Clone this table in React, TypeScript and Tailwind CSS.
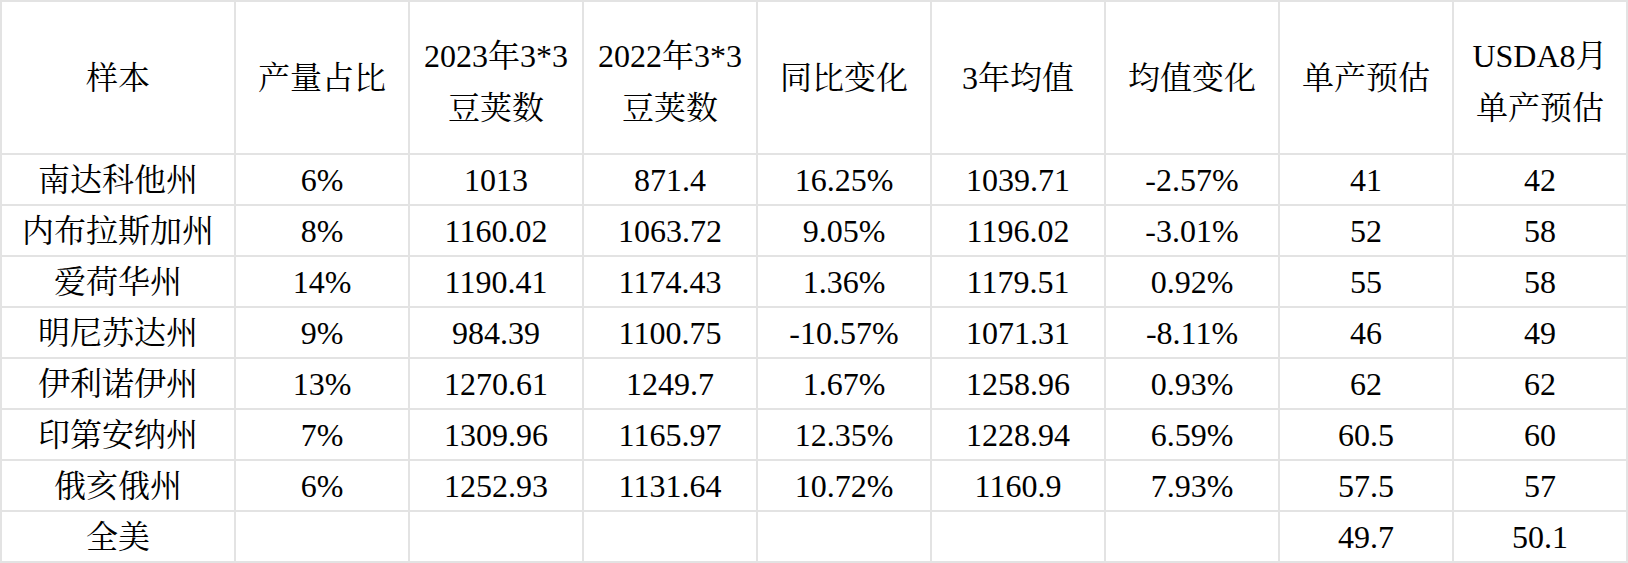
import React from "react";

const header: string[][] = [
  ["样本"],
  ["产量占比"],
  ["2023年3*3", "豆荚数"],
  ["2022年3*3", "豆荚数"],
  ["同比变化"],
  ["3年均值"],
  ["均值变化"],
  ["单产预估"],
  ["USDA8月", "单产预估"],
];

const rows: string[][] = [
  ["南达科他州", "6%", "1013", "871.4", "16.25%", "1039.71", "-2.57%", "41", "42"],
  ["内布拉斯加州", "8%", "1160.02", "1063.72", "9.05%", "1196.02", "-3.01%", "52", "58"],
  ["爱荷华州", "14%", "1190.41", "1174.43", "1.36%", "1179.51", "0.92%", "55", "58"],
  ["明尼苏达州", "9%", "984.39", "1100.75", "-10.57%", "1071.31", "-8.11%", "46", "49"],
  ["伊利诺伊州", "13%", "1270.61", "1249.7", "1.67%", "1258.96", "0.93%", "62", "62"],
  ["印第安纳州", "7%", "1309.96", "1165.97", "12.35%", "1228.94", "6.59%", "60.5", "60"],
  ["俄亥俄州", "6%", "1252.93", "1131.64", "10.72%", "1160.9", "7.93%", "57.5", "57"],
  ["全美", "", "", "", "", "", "", "49.7", "50.1"],
];

export default function App() {
  return (
    <div
      className="w-[1628px] h-[563px] bg-white text-black text-[32px]"
      style={{ fontFamily: '"Liberation Serif", "Noto Serif CJK SC", "Noto Sans CJK SC", serif' }}
    >
      <div className="grid grid-cols-[232px_repeat(8,172px)] grid-rows-[151px_repeat(8,49px)] gap-[2px] p-[2px] bg-[#e3e3e3] w-[1628px] h-[563px]">
        {header.map((h, i) => (
          <div
            key={"h" + i}
            className={
              "bg-white flex flex-col items-center justify-center whitespace-nowrap " +
              (h.length > 1 ? "leading-[52px] pt-[9px]" : "leading-none")
            }
          >
            {h.map((line, j) => (
              <span key={j}>{line}</span>
            ))}
          </div>
        ))}
        {rows.map((r, ri) =>
          r.map((c, ci) => (
            <div key={ri + "-" + ci} className="bg-white flex items-center justify-center whitespace-nowrap leading-none">
              {c}
            </div>
          ))
        )}
      </div>
    </div>
  );
}
